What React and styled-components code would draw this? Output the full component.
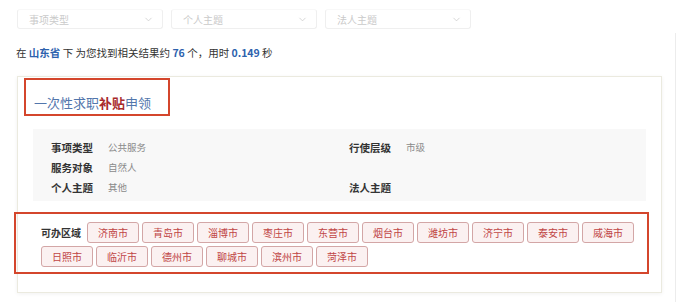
import React from 'react';
import styled, { createGlobalStyle } from 'styled-components';
import { ChevronDown } from 'lucide-react';

const GlobalStyle = createGlobalStyle`
    body {
        margin: 0;
        background: #fff;
        font-family: "Noto Sans CJK SC", "Noto Sans", sans-serif;
        color: #333;
    }
`;

const Page = styled.div`
    position: relative;
    width: 677px;
    height: 302px;
    padding-left: 16px;
    box-sizing: border-box;
    overflow: hidden;

    &::after {
        content: '';
        position: absolute;
        right: 1px;
        top: 33px;
        bottom: 0;
        width: 1px;
        background: #ececec;
    }
`;

const SelectRow = styled.div`
    display: flex;
    gap: 8px;
    padding-top: 9px;
    padding-left: 1px;
`;

const Select = styled.div`
    width: 146px;
    height: 20px;
    box-sizing: border-box;
    border: 1px solid #efefef;
    border-top-color: #f8f8f8;
    border-radius: 3px;
    display: flex;
    align-items: center;
    justify-content: space-between;
    padding: 0 8px 0 11px;
    font-size: 10px;
    color: #cacaca;
`;

const SearchInfo = styled.div`
    margin-top: 16px;
    font-size: 10.5px;
    line-height: 16px;
    color: #333;
`;

const Em = styled.b`
    color: #2d62ad;
    font-weight: 700;
`;

const Card = styled.div`
    margin-top: 15px;
    margin-left: 1px;
    width: 645px;
    box-sizing: border-box;
    border: 1px solid #ebeadf;
    box-shadow: 0 1px 4px rgba(0, 0, 0, 0.06);
    padding: 1px 15px 18px;
`;

const TitleBox = styled.div`
    width: 146px;
    height: 38px;
    box-sizing: border-box;
    margin-left: -9px;
    border: 2px solid #d4462c;
    padding: 15px 0 0 8px;
    font-size: 13px;
    line-height: 16px;
    color: #5276ac;
`;

const Hit = styled.span`
    color: #a8292b;
    font-weight: 600;
`;

const InfoBlock = styled.div`
    margin-top: 13px;
    background: #f8f8f8;
    padding: 8px 0 4px 18px;
    display: grid;
    grid-template-columns: 298px 1fr;
`;

const InfoItem = styled.div`
    display: flex;
    height: 20px;
    align-items: center;
`;

const Label = styled.span`
    width: 57px;
    font-size: 10.5px;
    font-weight: 700;
    color: #333;
`;

const Value = styled.span`
    font-size: 9.5px;
    color: #8a8a8a;
`;

const RegionBox = styled.div`
    margin: 11px -3px 0 -19px;
    border: 2px solid #d4462c;
    padding: 8px 10px 5px 25px;
    display: flex;
    flex-wrap: wrap;
    gap: 3px 3px;
`;

const RegionLabel = styled.span`
    width: 43px;
    height: 21px;
    line-height: 21px;
    font-size: 10px;
    font-weight: 700;
    color: #333;
`;

const Tag = styled.span`
    height: 21px;
    line-height: 19px;
    box-sizing: border-box;
    padding: 0 10px;
    border: 1px solid #d3a6a6;
    border-radius: 3px;
    background: #fbf1f1;
    color: #c04545;
    font-size: 10px;
`;

const info = [
    ['事项类型', '公共服务'],
    ['行使层级', '市级'],
    ['服务对象', '自然人'],
    ['', ''],
    ['个人主题', '其他'],
    ['法人主题', ''],
];

const cities = [
    '济南市', '青岛市', '淄博市', '枣庄市', '东营市', '烟台市', '潍坊市', '济宁市',
    '泰安市', '威海市', '日照市', '临沂市', '德州市', '聊城市', '滨州市', '菏泽市',
];

export default function App() {
    return (
        <Page>
            <GlobalStyle />
            <SelectRow>
                {['事项类型', '个人主题', '法人主题'].map((p) => (
                    <Select key={p}>
                        {p}
                        <ChevronDown size={11} strokeWidth={1.5} color="#c4c4c4" />
                    </Select>
                ))}
            </SelectRow>
            <SearchInfo>
                在 <Em>山东省</Em> 下 为您找到相关结果约 <Em>76</Em> 个，用时 <Em>0.149</Em> 秒
            </SearchInfo>
            <Card>
                <TitleBox>
                    一次性求职<Hit>补贴</Hit>申领
                </TitleBox>
                <InfoBlock>
                    {info.map(([k, v], i) => (
                        <InfoItem key={i}>
                            {k && <Label>{k}</Label>}
                            {v && <Value>{v}</Value>}
                        </InfoItem>
                    ))}
                </InfoBlock>
                <RegionBox>
                    <RegionLabel>可办区域</RegionLabel>
                    {cities.map((c) => (
                        <Tag key={c}>{c}</Tag>
                    ))}
                </RegionBox>
            </Card>
        </Page>
    );
}
